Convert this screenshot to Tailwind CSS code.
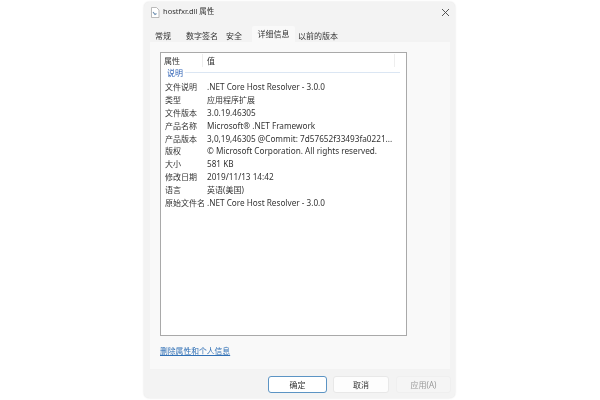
<!DOCTYPE html>
<html lang="zh-CN">
<head>
<meta charset="utf-8">
<script src="https://cdn.jsdelivr.net/npm/@tailwindcss/browser@4"></script>
</head>
<body class="bg-white">
<div class="w-[600px] h-[400px] overflow-hidden flex pl-[144px] pt-[2px] font-['Noto_Sans','Noto_Sans_CJK_SC',sans-serif] text-[8px] text-[#333]">
  <div class="w-[311px] h-[396px] bg-[#f3f3f3] rounded-[5px] shadow-[0_0_2px_rgba(0,0,0,0.15)] flex flex-col blur-[0.4px]">
    <div class="h-[20px] flex items-center pl-[6px] pr-[5px] shrink-0">
      <svg width="10" height="11" viewBox="0 0 10 11" class="mr-[3px]"><path d="M1.500.5h5l2.500 2.500v7.500h-7.500z" fill="#fff" stroke="#aaa" stroke-width=".8"/><path d="M3 5l2 2.500 1.500-1" fill="none" stroke="#6d8fb0" stroke-width="1.200"/></svg>
      <span class="text-[7.5px] text-[#333]">hostfxr.dll 属性</span>
      <svg width="9" height="9" viewBox="0 0 9 9" class="ml-auto"><path d="M1 1l7 7M8 1l-7 7" stroke="#444" stroke-width=".9"/></svg>
    </div>
    <div class="h-[20px] flex items-end pl-[6px] shrink-0">
      <div class="w-[31px] h-[16px] pl-[5px] pt-[2px] leading-[16px]">常规</div>
      <div class="w-[40px] h-[16px] pl-[5px] pt-[2px] leading-[16px]">数字签名</div>
      <div class="w-[31px] h-[16px] pl-[5px] pt-[2px] leading-[16px]">安全</div>
      <div class="w-[43px] h-[16px] bg-[#f9f9f9] rounded-t-[2px] text-center pt-[1px] leading-[14px]">详细信息</div>
      <div class="w-[48px] h-[16px] pl-[3px] pt-[2px] leading-[16px]">以前的版本</div>
    </div>
    <div class="ml-[6px] w-[300px] h-[327px] bg-[#f9f9f9] pt-[10px] pl-[10px] shrink-0">
      <div class="w-[247px] h-[284px] bg-white border border-[#a9a9a9] pt-[1px]">
        <div class="flex h-[13px] items-center">
          <div class="w-[42px] pl-[3px] border-r border-[#eee] h-full leading-[13px]">属性</div>
          <div class="w-[192px] pl-[4px] border-r border-[#eee] h-full leading-[13px]">值</div>
        </div>
        <div class="flex items-center h-[11px] pl-[6px] text-[#2f62b5]">
          <span>说明</span><div class="h-px w-[215px] bg-[#dbe6f3] ml-[2px]"></div>
        </div>
        <div class="grid grid-cols-[42px_1fr] auto-rows-[12.900px] pl-[4px] leading-[13px] mt-[2px]">
          <div>文件说明</div><div class="text-[8.200px]">.NET Core Host Resolver - 3.0.0</div>
          <div>类型</div><div>应用程序扩展</div>
          <div>文件版本</div><div class="text-[8.200px]">3.0.19.46305</div>
          <div>产品名称</div><div class="text-[8.200px]">Microsoft® .NET Framework</div>
          <div>产品版本</div><div class="text-[8.200px]">3,0,19,46305 @Commit: 7d57652f33493fa0221...</div>
          <div>版权</div><div class="text-[8.200px]">© Microsoft Corporation. All rights reserved.</div>
          <div>大小</div><div class="text-[8.200px]">581 KB</div>
          <div>修改日期</div><div class="text-[8.200px]">2019/11/13 14:42</div>
          <div>语言</div><div>英语(美国)</div>
          <div>原始文件名</div><div class="text-[8.200px]">.NET Core Host Resolver - 3.0.0</div>
        </div>
      </div>
      <a class="block mt-[9px] text-[#2f6fb5] text-[7.800px] underline leading-[12px]">删除属性和个人信息</a>
    </div>
    <div class="flex justify-end gap-[6px] pr-[4px] pt-[7px]">
      <div class="w-[59px] h-[17px] bg-white border border-[#5c94c4] rounded-[3px] flex items-center justify-center">确定</div>
      <div class="w-[56px] h-[17px] bg-[#fdfdfd] border border-[#e8e8e8] rounded-[3px] flex items-center justify-center">取消</div>
      <div class="w-[55px] h-[17px] ml-[1px] bg-[#f5f5f5] border border-[#efefef] rounded-[3px] flex items-center justify-center text-[#999]">应用(A)</div>
    </div>
  </div>
</div>
</body>
</html>
